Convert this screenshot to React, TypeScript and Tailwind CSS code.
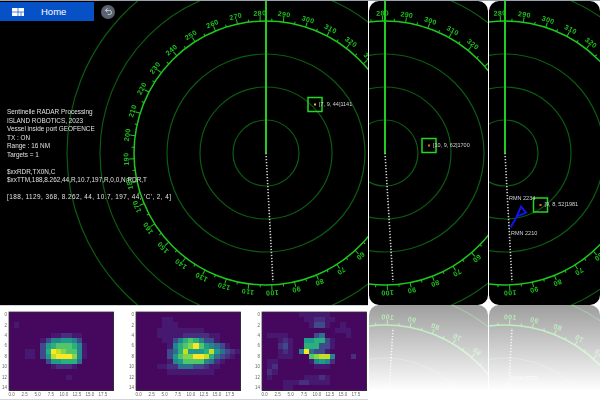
import type { ReactNode } from 'react';
import { Undo2 } from 'lucide-react';

const CY = 152;
const RINGS = [33, 66, 99, 166, 199];
const MARKS = Array.from({ length: 72 }, (_, i) => i * 5);

const VIRIDIS: Record<string, string> = {
  '0': '#46085f',
  '1': '#47186f',
  '2': '#482f7e',
  '3': '#3e4a89',
  '4': '#2d708e',
  '5': '#25858e',
  '6': '#1e9b8a',
  '7': '#2ab07f',
  '8': '#51c56a',
  '9': '#85d54a',
  a: '#c2df23',
  b: '#fde725',
};

const HEAT_ONE = [
  '00000000000000000000',
  '00000000000000000000',
  '01000000000000000000',
  '00000000000000000000',
  '00000000112211000000',
  '00000013556653000000',
  '00000036788875100000',
  '00011037ba9885100000',
  '00011036abbb95100000',
  '00000003667774000000',
  '00000000122210000000',
  '00000000000000000000',
  '00000000000100000000',
  '00000000000000000000',
  '00000000000000000000',
];

const HEAT_TWO = [
  '00000000000000000000',
  '00000110000000000000',
  '00000111000000000000',
  '00001111111110000000',
  '00001111122222110000',
  '00000113578753310000',
  '00000015789b86543100',
  '000000347a6667a64321',
  '00000036899bba743210',
  '00000015688885421000',
  '00001122444332110000',
  '00000011111111100000',
  '00000000000000000000',
  '00000000000000000000',
  '00000000000000000000',
];

const HEAT_THREE = [
  '00000001111110000000',
  '00000000112211000000',
  '00000000013310010000',
  '00000000000000111000',
  '01111000003400001000',
  '00012100667731000000',
  '00023100777331000000',
  '00012105b43310000000',
  '00011100089aa5000200',
  '01100000015652000000',
  '01200000001110000000',
  '02100000000000000000',
  '01000000111210000000',
  '00001112211110000000',
  '00001100000000000000',
];

function Heatmap({ rows }: { rows: string[] }) {
  const cell = 5.22;
  const left = 9;
  const top = 4;
  return (
    <svg width={114} height={93} className="shrink-0 blur-[0.4px]">
      <g shapeRendering="crispEdges">
        {rows.map((row, r) =>
          row.split('').map((v, c) => (
            <rect
              key={`${r}-${c}`}
              x={left + c * cell}
              y={top + r * cell}
              width={cell + 0.5}
              height={cell + 0.5}
              fill={VIRIDIS[v]}
            />
          )),
        )}
      </g>
      <rect
        x={left}
        y={top}
        width={cell * 20}
        height={cell * 15}
        fill="none"
        stroke="#333"
        strokeWidth={0.8}
      />
      {[0, 2, 4, 6, 8, 10, 12, 14].map((t) => (
        <text
          key={t}
          x={left - 2}
          y={top + (t + 0.5) * cell + 1.5}
          textAnchor="end"
          fontSize={4.5}
          fill="#666"
        >
          {t}
        </text>
      ))}
      {[0, 2.5, 5, 7.5, 10, 12.5, 15, 17.5].map((t) => (
        <text
          key={t}
          x={left + (t + 0.5) * cell}
          y={top + 15 * cell + 6}
          textAnchor="middle"
          fontSize={4.5}
          fill="#666"
        >
          {t.toFixed(1)}
        </text>
      ))}
    </svg>
  );
}

function Radar({
  width,
  cx,
  offset,
  dotX,
  children,
}: {
  width: number;
  cx: number;
  offset: number;
  dotX: number;
  children?: ReactNode;
}) {
  return (
    <svg width={width} height={304} className="block blur-[0.3px]">
      {RINGS.map((r) => (
        <circle key={r} cx={cx} cy={CY} r={r} fill="none" stroke="#0b5c10" strokeWidth={1.2} />
      ))}
      <circle cx={cx} cy={CY} r={132} fill="none" stroke="#1ec81e" strokeWidth={1.5} />
      {MARKS.map((m) => {
        const major = m % 10 === 0;
        const value = (280 + m) % 360;
        const rad = ((m + offset) * Math.PI) / 180;
        const lx = cx + 141 * Math.sin(rad);
        const ly = CY - 141 * Math.cos(rad);
        // labels that fall wholly outside the panel are left out
        const showLabel = major && lx > -3 && lx < width + 3 && ly > -3;
        return (
          <g key={m} transform={`rotate(${m + offset} ${cx} ${CY})`}>
            <line
              x1={cx}
              y1={CY - 132}
              x2={cx}
              y2={CY - (major ? 137 : 134.5)}
              stroke="#1ec81e"
              strokeWidth={1}
            />
            {showLabel && (
              <text
                x={cx}
                y={CY - 137.5}
                textAnchor="middle"
                fontSize={7}
                fontWeight={700}
                letterSpacing={0.4}
                fill="#1fc41f"
              >
                {value}
              </text>
            )}
          </g>
        );
      })}
      <line x1={cx} y1={0} x2={cx} y2={CY} stroke="#22cc22" strokeWidth={2} />
      <line
        x1={cx}
        y1={CY}
        x2={cx + dotX}
        y2={CY + 129}
        stroke="#d0d0d0"
        strokeWidth={1.6}
        strokeDasharray="1.3 1.7"
      />
      {children}
    </svg>
  );
}

function Target({ x, y, label, dot }: { x: number; y: number; label: string; dot: string }) {
  return (
    <g>
      <rect x={x - 7} y={y - 7} width={14} height={14} fill="none" stroke="#22d822" strokeWidth={1.5} />
      <rect x={x - 1} y={y - 1} width={2} height={2} fill={dot} />
      <text x={x + 4} y={y + 1} fontSize={5.5} fill="#d4d4d4">
        {label}
      </text>
    </g>
  );
}

const PanelOne = () => (
  <Radar width={368} cx={266} offset={-2.5} dotX={7}>
    <Target x={315} y={103.5} label="[7, 9, 44]1141" dot="#e8c020" />
  </Radar>
);

const PanelTwo = () => (
  <Radar width={119} cx={16} offset={-1} dotX={8}>
    <Target x={60} y={144.5} label="[10, 9, 62]1700" dot="#e87020" />
  </Radar>
);

const PanelThree = () => (
  <Radar width={111} cx={16} offset={-2} dotX={7}>
    <Target x={51.5} y={204} label="[9, 8, 52]1981" dot="#e87020" />
    <path
      d="M32 205.7 L37 211.7 L27.7 215.7 Z M27.7 215.7 L21.7 226.3"
      fill="none"
      stroke="#1414f0"
      strokeWidth={2}
    />
    <text x={20} y={199} fontSize={5.5} fill="#d4d4d4">
      RMN 2234
    </text>
    <text x={22} y={233.5} fontSize={5.5} fill="#d4d4d4">
      RMN 2210
    </text>
  </Radar>
);

function Reflection({ width, children }: { width: number; children: ReactNode }) {
  return (
    <div className="relative h-[95px] shrink-0 overflow-hidden" style={{ width }}>
      <div className="h-[304px] -scale-y-100 overflow-hidden rounded-[10px] bg-black">{children}</div>
      <div className="absolute inset-0 bg-linear-to-b from-white/62 from-0% to-white to-90%" />
    </div>
  );
}

export default function App() {
  return (
    <div className="flex h-[400px] w-[600px] flex-col overflow-hidden bg-white font-['Liberation_Sans',sans-serif]">
      <div className="h-px bg-gray-400" />
      <div className="flex h-[304px] gap-px">
        <div className="relative w-[368px] shrink-0 bg-black">
          <PanelOne />
          <div className="absolute left-0 top-px flex items-center gap-[7px]">
            <div className="flex h-[19px] w-[94px] items-center gap-[17px] bg-[#0751c6] pl-3 text-[9.5px] font-medium text-white">
              <svg width={12} height={8} viewBox="0 0 12 8">
                <path d="M0 0h12v8H0z" fill="#fff" />
                <path d="M6 0v8M9 4v4M0 4h12" stroke="#0751c6" strokeWidth={0.7} />
              </svg>
              <span className="pt-px">Home</span>
            </div>
            <div className="flex h-[14px] w-[14px] items-center justify-center rounded-full bg-[#5b6270]">
              <Undo2 size={9} color="#cbd5e1" strokeWidth={2.5} />
            </div>
          </div>
          <div className="absolute left-[7px] top-[107px] whitespace-pre text-[6.4px] leading-[8.5px] text-[#e0e0e0] blur-[0.25px]">
            {`Sentinelle RADAR Processing
ISLAND ROBOTICS, 2023
Vessel inside port GEOFENCE
TX : ON
Range : 16 NM
Targets = 1

$xxRDR,TX0N,C
$xxTTM,188,8.262,44,R,10.7,197,R,0,0,N,RDR,T

`}
            <span className="tracking-[0.43px]">
              {`[188, 1129, 368, 8.262, 44, 10.7, 197, 44, 'C', 2, 4]`}
            </span>
          </div>
        </div>
        <div className="w-[119px] shrink-0 overflow-hidden rounded-[10px] bg-black">
          <PanelTwo />
        </div>
        <div className="w-[111px] shrink-0 overflow-hidden rounded-[10px] bg-black">
          <PanelThree />
        </div>
      </div>
      <div className="flex h-[95px] gap-px">
        <div className="flex h-full w-[368px] shrink-0 gap-[12.5px] border-y border-gray-300 bg-white pt-[2px]">
          <Heatmap rows={HEAT_ONE} />
          <Heatmap rows={HEAT_TWO} />
          <Heatmap rows={HEAT_THREE} />
        </div>
        <Reflection width={119}>
          <PanelTwo />
        </Reflection>
        <Reflection width={111}>
          <PanelThree />
        </Reflection>
      </div>
    </div>
  );
}
